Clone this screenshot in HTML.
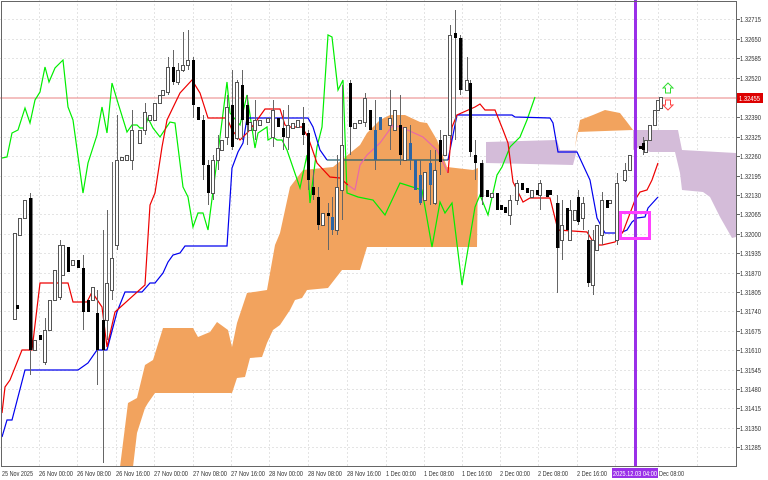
<!DOCTYPE html>
<html><head><meta charset="utf-8"><style>
html,body{margin:0;padding:0;background:#fff;width:768px;height:480px;overflow:hidden}
svg{display:block}
text{font-family:"Liberation Sans",sans-serif;font-size:7px;fill:#333}
</style></head><body>
<svg width="768" height="480" viewBox="0 0 768 480">
<g stroke="#e4e4e4" stroke-width="1" stroke-dasharray="2,2">
<line x1="0" y1="19.5" x2="736" y2="19.5"/><line x1="0" y1="39.5" x2="736" y2="39.5"/><line x1="0" y1="58.5" x2="736" y2="58.5"/><line x1="0" y1="78.5" x2="736" y2="78.5"/><line x1="0" y1="117.5" x2="736" y2="117.5"/><line x1="0" y1="137.5" x2="736" y2="137.5"/><line x1="0" y1="156.5" x2="736" y2="156.5"/><line x1="0" y1="176.5" x2="736" y2="176.5"/><line x1="0" y1="195.5" x2="736" y2="195.5"/><line x1="0" y1="214.5" x2="736" y2="214.5"/><line x1="0" y1="234.5" x2="736" y2="234.5"/><line x1="0" y1="253.5" x2="736" y2="253.5"/><line x1="0" y1="273.5" x2="736" y2="273.5"/><line x1="0" y1="292.5" x2="736" y2="292.5"/><line x1="0" y1="311.5" x2="736" y2="311.5"/><line x1="0" y1="331.5" x2="736" y2="331.5"/><line x1="0" y1="350.5" x2="736" y2="350.5"/><line x1="0" y1="370.5" x2="736" y2="370.5"/><line x1="0" y1="389.5" x2="736" y2="389.5"/><line x1="0" y1="408.5" x2="736" y2="408.5"/><line x1="0" y1="428.5" x2="736" y2="428.5"/><line x1="0" y1="447.5" x2="736" y2="447.5"/>
<line x1="39.5" y1="0" x2="39.5" y2="466"/><line x1="77.5" y1="0" x2="77.5" y2="466"/><line x1="116.5" y1="0" x2="116.5" y2="466"/><line x1="154.5" y1="0" x2="154.5" y2="466"/><line x1="193.5" y1="0" x2="193.5" y2="466"/><line x1="231.5" y1="0" x2="231.5" y2="466"/><line x1="269.5" y1="0" x2="269.5" y2="466"/><line x1="308.5" y1="0" x2="308.5" y2="466"/><line x1="347.5" y1="0" x2="347.5" y2="466"/><line x1="386.5" y1="0" x2="386.5" y2="466"/><line x1="424.5" y1="0" x2="424.5" y2="466"/><line x1="462.5" y1="0" x2="462.5" y2="466"/><line x1="500.5" y1="0" x2="500.5" y2="466"/><line x1="538.5" y1="0" x2="538.5" y2="466"/><line x1="577.5" y1="0" x2="577.5" y2="466"/><line x1="615.5" y1="0" x2="615.5" y2="466"/><line x1="658.5" y1="0" x2="658.5" y2="466"/><line x1="697.5" y1="0" x2="697.5" y2="466"/>
</g>
<polygon fill="#f2a35e" points="120,467 128,403 137,398 145,365 153,360 163,328 193,328 198,337 210,332 217,322 228,330 232,347 237,323 247,293 267,290 275,245 280,233 290,187 303,170 333,167 360,145 367,133 380,120 390,115 405,115 420,122 427,123 437,140 447,167 473,170 478,168 477,247 367,247 360,270 342,270 328,288 307,290 302,298 295,300 290,310 280,325 273,330 267,343 262,357 250,358 245,377 237,378 232,393 155,393 148,403 145,408 137,433 133,467"/>
<polygon fill="#d4bcd9" points="486,142 557,140 560,150 577,150 573,165 486,163"/>
<polygon fill="#d4bcd9" points="633,130 678,130 682,150 736,153 736,237 732,238 720,217 710,197 703,192 682,190 680,173 675,152 650,152 640,147 633,150"/>
<polygon fill="#f2a35e" points="575,148 580,120 593,115 605,110 620,113 627,122 633,130 577,132"/>
<line x1="0" y1="98" x2="736" y2="98" stroke="#e88080" stroke-width="1"/>
<polyline fill="none" stroke="#00ee00" stroke-width="1.2" points="2,158 7,157 12,133 18,130 25,108 30,123 35,100 40,92 45,67 49,82 55,68 63,60 68,107 73,120 83,193 88,163 97,135 102,107 107,133 112,83 118,103 127,132 132,125 137,125 140,128 145,128 148,118 153,128 160,137 170,122 175,123 183,187 188,197 193,227 198,213 203,213 208,230 220,137 227,82 230,113 240,125 247,95 255,148 258,133 267,127 268,140 273,137 277,140 282,140 287,150 300,188 307,155 310,203 317,147 322,127 328,35 332,37 338,90 343,80 347,193 358,197 373,200 385,215 400,183 422,190 432,247 440,202 445,213 452,203 462,285 475,207 480,195 488,215 497,175 502,167 510,147 520,137 527,120 535,97"/>
<polyline fill="none" stroke="#0000ee" stroke-width="1.2" points="2,437 7,420 12,420 25,370 78,370 88,363 97,350 107,350 117,312 125,292 142,292 150,283 155,283 163,273 168,262 173,255 180,253 185,246 227,246 232,168 238,152 243,143 247,118 308,118 313,127 320,150 327,160"/>
<polyline fill="none" stroke="#1f5f6f" stroke-width="1.2" points="327,160 448,160"/>
<polyline fill="none" stroke="#0000ee" stroke-width="1.2" points="448,160 457,115 512,115 515,117 550,118 553,123 558,152 577,152 590,180 597,218 605,233 620,233 627,230 632,222 637,218 645,217 648,208 658,197"/>
<polyline fill="none" stroke="#ee0000" stroke-width="1.2" points="2,413 5,387 10,380 22,350 32,350 40,283 68,283 73,302 87,302 92,292 102,307 107,347 115,312 145,285 150,205 155,193 162,147 167,120 180,93 192,80 200,93 208,118 227,118 232,130 240,140 248,132 255,123 265,109 280,109 285,125 290,127 302,127 308,137 317,163 330,177 340,178 348,185"/>
<polyline fill="none" stroke="#e868a8" stroke-width="1.2" points="348,185 355,190 360,165 367,155 380,143 393,125 403,128 423,137 437,150 448,173"/>
<polyline fill="none" stroke="#ee0000" stroke-width="1.2" points="448,173 452,127 457,115 475,107 480,104 485,110 495,110 503,130 508,143 513,182 523,202 530,198 550,198 558,230 587,232 595,245 602,245 615,242 623,232 635,200 640,192 647,190 652,180 658,163"/>
<g stroke="#666" stroke-width="1">
<line x1="15.5" y1="250" x2="15.5" y2="320"/><line x1="30.5" y1="193" x2="30.5" y2="375"/><line x1="45.5" y1="318" x2="45.5" y2="365"/><line x1="60.5" y1="240" x2="60.5" y2="300"/><line x1="83.5" y1="255" x2="83.5" y2="330"/><line x1="97.5" y1="290" x2="97.5" y2="385"/><line x1="103.5" y1="230" x2="103.5" y2="463"/><line x1="107.5" y1="210" x2="107.5" y2="340"/><line x1="112.5" y1="162" x2="112.5" y2="300"/><line x1="117.5" y1="115" x2="117.5" y2="250"/><line x1="132.5" y1="110" x2="132.5" y2="170"/><line x1="145.5" y1="103" x2="145.5" y2="135"/><line x1="168.5" y1="57" x2="168.5" y2="95"/><line x1="173.5" y1="50" x2="173.5" y2="85"/><line x1="178.5" y1="63" x2="178.5" y2="85"/><line x1="183.5" y1="32" x2="183.5" y2="72"/><line x1="188.5" y1="30" x2="188.5" y2="70"/><line x1="193.5" y1="57" x2="193.5" y2="118"/><line x1="203.5" y1="115" x2="203.5" y2="180"/><line x1="208.5" y1="160" x2="208.5" y2="205"/><line x1="213.5" y1="155" x2="213.5" y2="200"/><line x1="218.5" y1="135" x2="218.5" y2="170"/><line x1="227.5" y1="95" x2="227.5" y2="145"/><line x1="232.5" y1="70" x2="232.5" y2="150"/><line x1="237.5" y1="80" x2="237.5" y2="140"/><line x1="242.5" y1="70" x2="242.5" y2="140"/><line x1="247.5" y1="95" x2="247.5" y2="145"/><line x1="255.5" y1="100" x2="255.5" y2="140"/><line x1="273.5" y1="100" x2="273.5" y2="147"/><line x1="283.5" y1="110" x2="283.5" y2="150"/><line x1="288.5" y1="105" x2="288.5" y2="150"/><line x1="303.5" y1="107" x2="303.5" y2="145"/><line x1="308.5" y1="130" x2="308.5" y2="190"/><line x1="313.5" y1="170" x2="313.5" y2="200"/><line x1="318.5" y1="187" x2="318.5" y2="230"/><line x1="328.5" y1="203" x2="328.5" y2="250"/><line x1="332.5" y1="197" x2="332.5" y2="235"/><line x1="337.5" y1="155" x2="337.5" y2="235"/><line x1="342.5" y1="85" x2="342.5" y2="220"/><line x1="350.5" y1="80" x2="350.5" y2="155"/><line x1="365.5" y1="93" x2="365.5" y2="127"/><line x1="375.5" y1="100" x2="375.5" y2="170"/><line x1="390.5" y1="90" x2="390.5" y2="150"/><line x1="400.5" y1="95" x2="400.5" y2="165"/><line x1="410.5" y1="125" x2="410.5" y2="170"/><line x1="420.5" y1="160" x2="420.5" y2="205"/><line x1="430.5" y1="150" x2="430.5" y2="205"/><line x1="435.5" y1="150" x2="435.5" y2="205"/><line x1="440.5" y1="130" x2="440.5" y2="175"/><line x1="450.5" y1="25" x2="450.5" y2="140"/><line x1="455.5" y1="10" x2="455.5" y2="140"/><line x1="460.5" y1="35" x2="460.5" y2="95"/><line x1="467.5" y1="57" x2="467.5" y2="90"/><line x1="470.5" y1="80" x2="470.5" y2="157"/><line x1="475.5" y1="140" x2="475.5" y2="180"/><line x1="482.5" y1="160" x2="482.5" y2="205"/><line x1="510.5" y1="195" x2="510.5" y2="225"/><line x1="517.5" y1="180" x2="517.5" y2="205"/><line x1="540.5" y1="180" x2="540.5" y2="210"/><line x1="557.5" y1="195" x2="557.5" y2="293"/><line x1="562.5" y1="200" x2="562.5" y2="260"/><line x1="570.5" y1="200" x2="570.5" y2="240"/><line x1="578.5" y1="190" x2="578.5" y2="225"/><line x1="583.5" y1="197" x2="583.5" y2="230"/><line x1="588.5" y1="230" x2="588.5" y2="287"/><line x1="593.5" y1="230" x2="593.5" y2="295"/><line x1="602.5" y1="192" x2="602.5" y2="245"/><line x1="617.5" y1="173" x2="617.5" y2="245"/><line x1="625.5" y1="163" x2="625.5" y2="182"/><line x1="643.5" y1="137" x2="643.5" y2="155"/>
</g>
<g stroke="#555" stroke-width="1" fill="#fff">
<rect x="13.5" y="233.5" width="3" height="86"/><rect x="18.5" y="218.5" width="3" height="17"/><rect x="23.5" y="200.5" width="3" height="18"/><rect x="33.5" y="340.5" width="3" height="10"/><rect x="43.5" y="330.5" width="3" height="32"/><rect x="48.5" y="300.5" width="3" height="30"/><rect x="53.5" y="270.5" width="3" height="30"/><rect x="58.5" y="245.5" width="3" height="52"/><rect x="61.5" y="245.5" width="3" height="30"/><rect x="71.5" y="260.5" width="3" height="5"/><rect x="91.5" y="287.5" width="3" height="13"/><rect x="105.5" y="283.5" width="3" height="37"/><rect x="110.5" y="258.5" width="3" height="32"/><rect x="115.5" y="160.5" width="3" height="85"/><rect x="120.5" y="157.5" width="3" height="3"/><rect x="125.5" y="155.5" width="3" height="5"/><rect x="130.5" y="130.5" width="3" height="30"/><rect x="138.5" y="130.5" width="3" height="13"/><rect x="143.5" y="112.5" width="3" height="18"/><rect x="148.5" y="115.5" width="3" height="5"/><rect x="153.5" y="103.5" width="3" height="17"/><rect x="158.5" y="95.5" width="3" height="8"/><rect x="161.5" y="90.5" width="3" height="5"/><rect x="166.5" y="67.5" width="3" height="25"/><rect x="176.5" y="70.5" width="3" height="12"/><rect x="181.5" y="65.5" width="3" height="5"/><rect x="186.5" y="60.5" width="3" height="5"/><rect x="211.5" y="160.5" width="3" height="33"/><rect x="216.5" y="148.5" width="3" height="12"/><rect x="220.5" y="140.5" width="3" height="10"/><rect x="225.5" y="107.5" width="3" height="30"/><rect x="235.5" y="82.5" width="3" height="56"/><rect x="248.5" y="122.5" width="3" height="8"/><rect x="253.5" y="120.5" width="3" height="10"/><rect x="258.5" y="120.5" width="3" height="5"/><rect x="266.5" y="118.5" width="3" height="4"/><rect x="271.5" y="110.5" width="3" height="27"/><rect x="286.5" y="125.5" width="3" height="12"/><rect x="291.5" y="123.5" width="3" height="5"/><rect x="296.5" y="120.5" width="3" height="7"/><rect x="321.5" y="213.5" width="3" height="12"/><rect x="335.5" y="187.5" width="3" height="43"/><rect x="340.5" y="145.5" width="3" height="45"/><rect x="353.5" y="123.5" width="3" height="5"/><rect x="358.5" y="120.5" width="3" height="3"/><rect x="363.5" y="98.5" width="3" height="24"/><rect x="388.5" y="118.5" width="3" height="7"/><rect x="393.5" y="110.5" width="3" height="20"/><rect x="403.5" y="127.5" width="3" height="33"/><rect x="423.5" y="172.5" width="3" height="28"/><rect x="433.5" y="170.5" width="3" height="33"/><rect x="443.5" y="135.5" width="3" height="20"/><rect x="448.5" y="35.5" width="3" height="100"/><rect x="465.5" y="80.5" width="3" height="10"/><rect x="490.5" y="193.5" width="3" height="4"/><rect x="508.5" y="200.5" width="3" height="15"/><rect x="515.5" y="183.5" width="3" height="17"/><rect x="530.5" y="190.5" width="3" height="7"/><rect x="538.5" y="183.5" width="3" height="12"/><rect x="560.5" y="225.5" width="3" height="15"/><rect x="568.5" y="210.5" width="3" height="30"/><rect x="573.5" y="210.5" width="3" height="10"/><rect x="581.5" y="203.5" width="3" height="15"/><rect x="591.5" y="240.5" width="3" height="45"/><rect x="595.5" y="225.5" width="3" height="25"/><rect x="600.5" y="200.5" width="3" height="35"/><rect x="608.5" y="200.5" width="3" height="3"/><rect x="615.5" y="183.5" width="3" height="57"/><rect x="623.5" y="170.5" width="3" height="10"/><rect x="628.5" y="155.5" width="3" height="15"/><rect x="644.5" y="140.5" width="3" height="12"/><rect x="648.5" y="125.5" width="3" height="15"/><rect x="653.5" y="110.5" width="3" height="15"/><rect x="656.5" y="100.5" width="3" height="10"/><rect x="659.5" y="97.5" width="3" height="11"/>
</g>
<g fill="#000">
<rect x="29" y="198" width="3.5" height="152"/><rect x="16" y="305" width="3" height="4"/><rect x="39" y="335" width="3" height="5"/><rect x="67" y="247" width="3" height="25"/><rect x="77" y="260" width="3" height="8"/><rect x="82" y="268" width="3" height="44"/><rect x="87" y="300" width="3" height="12"/><rect x="96" y="313" width="3" height="37"/><rect x="102" y="320" width="3" height="30"/><rect x="172" y="67" width="3" height="15"/><rect x="192" y="60" width="3" height="45"/><rect x="197" y="107" width="3" height="13"/><rect x="202" y="120" width="3" height="45"/><rect x="207" y="165" width="3" height="28"/><rect x="231" y="105" width="3" height="42"/><rect x="241" y="85" width="3" height="35"/><rect x="246" y="105" width="3" height="20"/><rect x="277" y="118" width="3" height="9"/><rect x="282" y="128" width="3" height="9"/><rect x="302" y="123" width="3" height="12"/><rect x="307" y="133" width="3" height="47"/><rect x="312" y="187" width="3" height="8"/><rect x="317" y="197" width="3" height="28"/><rect x="327" y="213" width="3" height="3"/><rect x="349" y="83" width="3" height="44"/><rect x="369" y="110" width="3" height="20"/><rect x="399" y="125" width="3" height="30"/><rect x="439" y="140" width="3" height="22"/><rect x="454" y="33" width="3" height="5"/><rect x="459" y="38" width="3.5" height="52"/><rect x="469" y="83" width="3" height="69"/><rect x="474" y="155" width="3" height="8"/><rect x="480" y="163" width="3.5" height="34"/><rect x="486" y="190" width="3" height="7"/><rect x="496" y="193" width="3" height="17"/><rect x="500" y="205" width="3" height="5"/><rect x="504" y="207" width="3" height="6"/><rect x="521" y="183" width="3" height="7"/><rect x="526" y="188" width="3" height="5"/><rect x="536" y="190" width="3" height="5"/><rect x="546" y="190" width="3" height="7"/><rect x="549" y="190" width="3" height="5"/><rect x="556" y="203" width="3.5" height="45"/><rect x="566" y="208" width="3" height="22"/><rect x="577" y="197" width="3" height="25"/><rect x="587" y="240" width="3.5" height="43"/><rect x="606" y="200" width="3" height="8"/><rect x="639" y="146" width="3" height="3"/><rect x="642" y="143" width="3" height="7"/>
</g>
<g fill="#2b65a5">
<rect x="331" y="217" width="3" height="13"/><rect x="374" y="130" width="3" height="30"/><rect x="379" y="117" width="3" height="13"/><rect x="409" y="143" width="3" height="17"/><rect x="414" y="160" width="3" height="30"/><rect x="419" y="175" width="3" height="28"/><rect x="429" y="163" width="3" height="22"/>
</g>
<line x1="635.5" y1="0" x2="635.5" y2="466" stroke="#9a30e8" stroke-width="3"/>
<rect x="620.5" y="212.5" width="29" height="26" fill="none" stroke="#ff40ff" stroke-width="3"/>
<path d="M668 83 L673 88 L670.5 88 L670.5 93 L665.5 93 L665.5 88 L663 88 Z" fill="none" stroke="#33dd33" stroke-width="1"/>
<path d="M668 110 L673 105 L670.5 105 L670.5 100 L665.5 100 L665.5 105 L663 105 Z" fill="none" stroke="#ff4444" stroke-width="1"/>
<rect x="1.5" y="1.5" width="735" height="465" fill="none" stroke="#666" stroke-width="1"/>
<g stroke="#666"><line x1="737" y1="19.5" x2="740" y2="19.5"/><line x1="737" y1="39.5" x2="740" y2="39.5"/><line x1="737" y1="58.5" x2="740" y2="58.5"/><line x1="737" y1="78.5" x2="740" y2="78.5"/><line x1="737" y1="117.5" x2="740" y2="117.5"/><line x1="737" y1="137.5" x2="740" y2="137.5"/><line x1="737" y1="156.5" x2="740" y2="156.5"/><line x1="737" y1="176.5" x2="740" y2="176.5"/><line x1="737" y1="195.5" x2="740" y2="195.5"/><line x1="737" y1="214.5" x2="740" y2="214.5"/><line x1="737" y1="234.5" x2="740" y2="234.5"/><line x1="737" y1="253.5" x2="740" y2="253.5"/><line x1="737" y1="273.5" x2="740" y2="273.5"/><line x1="737" y1="292.5" x2="740" y2="292.5"/><line x1="737" y1="311.5" x2="740" y2="311.5"/><line x1="737" y1="331.5" x2="740" y2="331.5"/><line x1="737" y1="350.5" x2="740" y2="350.5"/><line x1="737" y1="370.5" x2="740" y2="370.5"/><line x1="737" y1="389.5" x2="740" y2="389.5"/><line x1="737" y1="408.5" x2="740" y2="408.5"/><line x1="737" y1="428.5" x2="740" y2="428.5"/><line x1="737" y1="447.5" x2="740" y2="447.5"/></g>
<g font-size="7">
<text x="740" y="22" textLength="21" lengthAdjust="spacingAndGlyphs">1.32715</text><text x="740" y="42" textLength="21" lengthAdjust="spacingAndGlyphs">1.32650</text><text x="740" y="61" textLength="21" lengthAdjust="spacingAndGlyphs">1.32585</text><text x="740" y="81" textLength="21" lengthAdjust="spacingAndGlyphs">1.32520</text><text x="740" y="120" textLength="21" lengthAdjust="spacingAndGlyphs">1.32390</text><text x="740" y="140" textLength="21" lengthAdjust="spacingAndGlyphs">1.32325</text><text x="740" y="159" textLength="21" lengthAdjust="spacingAndGlyphs">1.32260</text><text x="740" y="179" textLength="21" lengthAdjust="spacingAndGlyphs">1.32195</text><text x="740" y="198" textLength="21" lengthAdjust="spacingAndGlyphs">1.32130</text><text x="740" y="217" textLength="21" lengthAdjust="spacingAndGlyphs">1.32065</text><text x="740" y="237" textLength="21" lengthAdjust="spacingAndGlyphs">1.32000</text><text x="740" y="256" textLength="21" lengthAdjust="spacingAndGlyphs">1.31935</text><text x="740" y="276" textLength="21" lengthAdjust="spacingAndGlyphs">1.31870</text><text x="740" y="295" textLength="21" lengthAdjust="spacingAndGlyphs">1.31805</text><text x="740" y="314" textLength="21" lengthAdjust="spacingAndGlyphs">1.31740</text><text x="740" y="334" textLength="21" lengthAdjust="spacingAndGlyphs">1.31675</text><text x="740" y="353" textLength="21" lengthAdjust="spacingAndGlyphs">1.31610</text><text x="740" y="373" textLength="21" lengthAdjust="spacingAndGlyphs">1.31545</text><text x="740" y="392" textLength="21" lengthAdjust="spacingAndGlyphs">1.31480</text><text x="740" y="411" textLength="21" lengthAdjust="spacingAndGlyphs">1.31415</text><text x="740" y="431" textLength="21" lengthAdjust="spacingAndGlyphs">1.31350</text><text x="740" y="450" textLength="21" lengthAdjust="spacingAndGlyphs">1.31285</text>
</g>
<rect x="737" y="93" width="26" height="10" fill="#dd0000"/>
<text x="739" y="101" textLength="21" lengthAdjust="spacingAndGlyphs" style="fill:#fff">1.32455</text>
<g>
<text x="2" y="476" textLength="31" lengthAdjust="spacingAndGlyphs">25 Nov 2025</text><text x="39" y="476" textLength="34" lengthAdjust="spacingAndGlyphs">26 Nov 00:00</text><text x="77" y="476" textLength="34" lengthAdjust="spacingAndGlyphs">26 Nov 08:00</text><text x="116" y="476" textLength="34" lengthAdjust="spacingAndGlyphs">26 Nov 16:00</text><text x="154" y="476" textLength="34" lengthAdjust="spacingAndGlyphs">27 Nov 00:00</text><text x="193" y="476" textLength="34" lengthAdjust="spacingAndGlyphs">27 Nov 08:00</text><text x="231" y="476" textLength="34" lengthAdjust="spacingAndGlyphs">27 Nov 16:00</text><text x="269" y="476" textLength="34" lengthAdjust="spacingAndGlyphs">28 Nov 00:00</text><text x="308" y="476" textLength="34" lengthAdjust="spacingAndGlyphs">28 Nov 08:00</text><text x="347" y="476" textLength="34" lengthAdjust="spacingAndGlyphs">28 Nov 16:00</text><text x="386" y="476" textLength="30" lengthAdjust="spacingAndGlyphs">1 Dec 00:00</text><text x="424" y="476" textLength="30" lengthAdjust="spacingAndGlyphs">1 Dec 08:00</text><text x="462" y="476" textLength="30" lengthAdjust="spacingAndGlyphs">1 Dec 16:00</text><text x="500" y="476" textLength="30" lengthAdjust="spacingAndGlyphs">2 Dec 00:00</text><text x="538" y="476" textLength="30" lengthAdjust="spacingAndGlyphs">2 Dec 08:00</text><text x="577" y="476" textLength="30" lengthAdjust="spacingAndGlyphs">2 Dec 16:00</text><text x="659" y="476" textLength="25" lengthAdjust="spacingAndGlyphs">Dec 08:00</text>
</g>
<rect x="612" y="468" width="46" height="10" fill="#9a30e8"/>
<text x="613" y="476" textLength="44" lengthAdjust="spacingAndGlyphs" style="fill:#fff">2025.12.03 04:00</text>
</svg>
</body></html>
